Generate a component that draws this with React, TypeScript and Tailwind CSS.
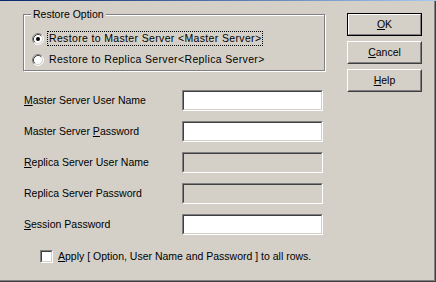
import type { ReactNode } from "react";

function Radio({ checked }: { checked?: boolean }) {
  return (
    <svg width="12" height="12" viewBox="0 0 12 12" className="shrink-0">
      <circle cx="6" cy="6" r="5" fill="#ffffff" />
      <path d="M2.11 9.89 A5.5 5.5 0 0 1 9.89 2.11" fill="none" stroke="#808080" strokeWidth="1" />
      <path d="M9.89 2.11 A5.5 5.5 0 0 1 2.11 9.89" fill="none" stroke="#ffffff" strokeWidth="1" />
      <path d="M2.82 9.18 A4.5 4.5 0 0 1 9.18 2.82" fill="none" stroke="#404040" strokeWidth="1" />
      <path d="M9.18 2.82 A4.5 4.5 0 0 1 2.82 9.18" fill="none" stroke="#d4d0c8" strokeWidth="1" />
      {checked && <circle cx="6" cy="6" r="2" fill="#000000" />}
    </svg>
  );
}

function Sunken({ className, disabled }: { className: string; disabled?: boolean }) {
  return (
    <div className={`${className} border border-t-[#808080] border-l-[#808080] border-r-white border-b-white`}>
      <div
        className={`w-full h-full border border-t-[#404040] border-l-[#404040] border-r-[#d4d0c8] border-b-[#d4d0c8] ${
          disabled ? "bg-[#d4d0c8]" : "bg-white"
        }`}
      />
    </div>
  );
}

function Button({ children, primary }: { children: ReactNode; primary?: boolean }) {
  if (primary) {
    return (
      <div className="w-[75px] h-[23px] border border-black">
        <div className="w-full h-full border border-t-white border-l-white border-r-[#808080] border-b-[#808080] flex items-center justify-center">
          {children}
        </div>
      </div>
    );
  }
  return (
    <div className="w-[75px] h-[23px] border border-t-white border-l-white border-r-[#404040] border-b-[#404040]">
      <div className="w-full h-full border border-t-[#d4d0c8] border-l-[#d4d0c8] border-r-[#808080] border-b-[#808080] flex items-center justify-center">
        {children}
      </div>
    </div>
  );
}

const fields = [
  { pre: "", key: "M", post: "aster Server User Name", disabled: false },
  { pre: "Master Server ", key: "P", post: "assword", disabled: false },
  { pre: "", key: "R", post: "eplica Server User Name", disabled: true },
  { pre: "Replica Server Password", key: "", post: "", disabled: true },
  { pre: "", key: "S", post: "ession Password", disabled: false },
];

export default function App() {
  return (
    <div className="w-[436px] h-[282px] bg-[#d4d0c8] flex flex-col font-['Liberation_Sans',Arial,sans-serif] text-[10.5px] leading-[13px] text-black">
      <div className="h-px bg-gradient-to-r from-[#0a246a] to-[#a6caf0]" />
      <div className="flex-1 border-r border-b border-[#404040]">
        <div className="h-full border-r border-b border-[#808080] flex">
          {/* Left side */}
          <div className="pl-[23px] flex flex-col">
            {/* Restore Option group */}
            <div className="relative mt-[13px] w-[302px] h-[57px] border border-[#808080] shadow-[inset_1px_1px_0_#ffffff,1px_1px_0_#ffffff]">
              <span className="absolute left-[7px] -top-[7px] px-[2px] bg-[#d4d0c8]">Restore Option</span>
              <div className="flex flex-col pt-[16px] pl-[8px] gap-[6px]">
                <div className="flex items-center">
                  <Radio checked />
                  <span className="ml-[3px] px-px border border-dotted border-black tracking-[0.35px]">
                    Restore to Master Server &lt;Master Server&gt;
                  </span>
                </div>
                <div className="flex items-center">
                  <Radio />
                  <span className="ml-[3px] px-px border border-transparent tracking-[0.35px]">
                    Restore to Replica Server&lt;Replica Server&gt;
                  </span>
                </div>
              </div>
            </div>

            {/* Fields */}
            <div className="mt-[19px] flex flex-col gap-[10px]">
              {fields.map((f) => (
                <div key={f.pre + f.key + f.post} className="flex items-center h-[21px]">
                  <span className="w-[159px] pl-px">
                    {f.pre}
                    {f.key && <span className="underline">{f.key}</span>}
                    {f.post}
                  </span>
                  <Sunken className="w-[141px] h-[21px]" disabled={f.disabled} />
                </div>
              ))}
            </div>

            <div className="mt-[14px] ml-[17px] flex items-center">
              <Sunken className="w-[13px] h-[13px]" />
              <span className="ml-[5px] mt-px">
                <span className="underline">A</span>pply [ Option, User Name and Password ] to all rows.
              </span>
            </div>
          </div>

          {/* Buttons */}
          <div className="ml-[22px] pt-[12px] flex flex-col gap-[5px]">
            <Button primary>
              <span><span className="underline">O</span>K</span>
            </Button>
            <Button>
              <span><span className="underline">C</span>ancel</span>
            </Button>
            <Button>
              <span><span className="underline">H</span>elp</span>
            </Button>
          </div>
        </div>
      </div>
    </div>
  );
}
